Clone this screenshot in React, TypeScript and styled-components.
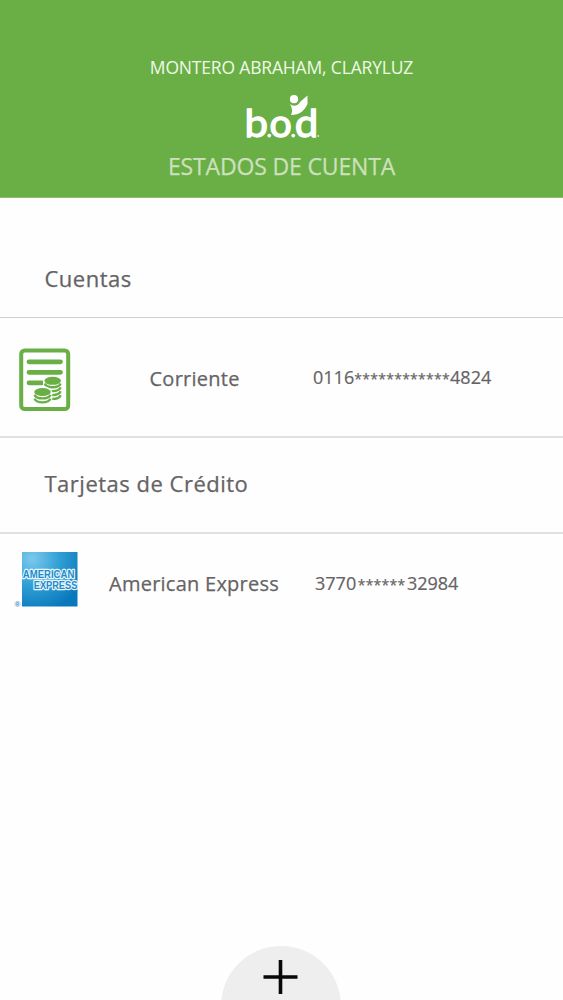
import React from "react";
import styled, { createGlobalStyle } from "styled-components";

const GlobalStyle = createGlobalStyle`
  * { box-sizing: border-box; }
  body { margin: 0; background: #fefefe; font-family: "Open Sans", "Noto Sans", sans-serif; }
`;

const Screen = styled.div`
  display: flex;
  flex-direction: column;
  width: 100%;
  height: 1000px;
  overflow: hidden;
  color: #656365;
`;

const Header = styled.header`
  display: flex;
  flex-direction: column;
  align-items: center;
  height: 198px;
  padding-top: 55px;
  background: #69af45;
  border-bottom: 1px solid #8fbd78;
`;

const UserName = styled.div`
  font-size: 17.5px;
  line-height: 24px;
  letter-spacing: -0.17px;
  color: #f0f9e8;
  white-space: nowrap;
`;

const Logo = styled.svg`
  display: block;
  width: 80px;
  height: 48px;
  margin-top: 13px;
  overflow: visible;
`;

const Title = styled.h1`
  margin: 10px 0 0;
  font-size: 23px;
  font-weight: 400;
  line-height: 32px;
  letter-spacing: -0.15px;
  color: #cde0bd;
  -webkit-text-stroke: 0.25px #cde0bd;
  white-space: nowrap;
`;

const SectionTitle = styled.h2<{ $height: number; $top: number; $line: string }>`
  margin: 0;
  height: ${(p) => p.$height}px;
  padding: ${(p) => p.$top}px 0 0 44.5px;
  border-bottom: ${(p) => p.$line};
  font-size: 22px;
  font-weight: 500;
  line-height: 30px;
  letter-spacing: 0.5px;
  -webkit-text-stroke: 0.25px #656365;
`;

const Row = styled.div<{ $height: number; $line?: boolean; $columns: string }>`
  display: grid;
  grid-template-columns: ${(p) => p.$columns};
  align-items: start;
  height: ${(p) => p.$height}px;
  border-bottom: ${(p) => (p.$line ? "2px solid #e0e0e1" : "none")};
`;

const Icon = styled.svg<{ $top: number; $left: number }>`
  display: block;
  margin: ${(p) => p.$top}px 0 0 ${(p) => p.$left}px;
  overflow: visible;
`;

const AccountName = styled.div<{ $top: number }>`
  padding-top: ${(p) => p.$top}px;
  font-size: 20px;
  font-weight: 500;
  line-height: 28px;
  letter-spacing: 0.25px;
  -webkit-text-stroke: 0.25px #656365;
  white-space: nowrap;
`;

const AccountNumber = styled.div<{ $top: number }>`
  display: flex;
  padding-top: ${(p) => p.$top}px;
  font-size: 18px;
  font-weight: 500;
  line-height: 26px;
  -webkit-text-stroke: 0.2px #656365;
  white-space: nowrap;
`;

const Mask = styled.span<{ $gap: number }>`
  padding: 2px ${(p) => p.$gap}px 0;
  font-size: 14px;
  letter-spacing: 0.25px;
`;

const Footer = styled.footer`
  display: flex;
  justify-content: center;
  height: 54px;
  margin-top: auto;
  padding-right: 1px;
  overflow: hidden;
`;

const AddButton = styled.button`
  display: flex;
  flex-shrink: 0;
  justify-content: center;
  width: 120px;
  height: 120px;
  padding: 13px 0 0;
  border: 0;
  border-radius: 50%;
  background: #efeeef;
`;

function BodLogo() {
  return (
    <Logo viewBox="242 92 80 48" role="img" aria-label="b.o.d.">
      <g fill="#fff" stroke="#fff" strokeWidth="1.300" fontFamily="Lato, sans-serif" fontWeight="400" fontSize="39.500">
        <text x="244.500" y="136.600" textLength="23.500" lengthAdjust="spacingAndGlyphs">b</text>
        <text x="269.600" y="136.600" fontSize="38.500" textLength="22.300" lengthAdjust="spacingAndGlyphs">o</text>
        <text x="294.800" y="136.600" textLength="23.500" lengthAdjust="spacingAndGlyphs">d</text>
      </g>
      <circle cx="269.300" cy="135.600" r="1.900" fill="#fff" />
      <circle cx="293.300" cy="135.600" r="1.900" fill="#fff" />
      <circle cx="318.300" cy="136" r="0.900" fill="#d9edcb" />
      <circle cx="294" cy="99.200" r="4.100" fill="#fff" />
      <path
        d="M289.300 103.500C292.500 107 298 106.500 300.500 101.500L307.500 95.500V104C304.500 110.500 300 115 291 115C293 111 292 106.500 289.300 103.500Z"
        fill="#fff"
      />
    </Logo>
  );
}

function CoinStack({ x, y, rows }: { x: number; y: number; rows: number }) {
  return (
    <g transform={`translate(${x} ${y})`}>
      <path
        d={`M-9.700 0 A9.700 5.700 0 0 1 9.700 0 V${rows * 3.9} A9.700 5 0 0 1 -9.700 ${rows * 3.9} Z`}
        fill="#fefefe"
      />
      <ellipse rx="8.300" ry="4" fill="#69af45" />
      {Array.from({ length: rows }, (_, i) => (
        <path
          key={i}
          d={`M-8 ${2.7 + i * 3.9} C-6 ${7.7 + i * 3.9} 6 ${7.7 + i * 3.9} 8 ${2.7 + i * 3.9}`}
          fill="none"
          stroke="#69af45"
          strokeWidth="2.300"
        />
      ))}
    </g>
  );
}

function StatementIcon() {
  return (
    <Icon $top={30} $left={19} width="52" height="64" viewBox="19 348 52 64">
      <rect x="21.200" y="350.500" width="47" height="58.500" rx="3.500" fill="#fefefe" stroke="#69af45" strokeWidth="4" />
      <path d="M29 361.800H60.500M29 372.300H60.500M29 382.800H42" stroke="#69af45" strokeWidth="4.800" strokeLinecap="round" />
      <CoinStack x={52.7} y={380.8} rows={4} />
      <CoinStack x={42.5} y={392} rows={2} />
    </Icon>
  );
}

function AmexIcon() {
  return (
    <Icon $top={17} $left={14} width="65" height="58" viewBox="14 551 65 58">
      <defs>
        <radialGradient id="card" cx="0.18" cy="0.12" r="1">
          <stop offset="0" stopColor="#7cc9ed" />
          <stop offset="0.5" stopColor="#309fd5" />
          <stop offset="1" stopColor="#0878bc" />
        </radialGradient>
      </defs>
      <rect x="22" y="552" width="55.500" height="54.500" fill="url(#card)" />
      <g
        fill="#1c8bc9"
        stroke="#eaf7fd"
        strokeWidth="2.400"
        strokeLinejoin="round"
        paintOrder="stroke"
        fontFamily="Liberation Sans, sans-serif"
        fontWeight="700"
        fontSize="10"
      >
        <text x="22.800" y="578.200" textLength="51.500" lengthAdjust="spacingAndGlyphs">AMERICAN</text>
        <text x="33.800" y="589.200" textLength="43.500" lengthAdjust="spacingAndGlyphs">EXPRESS</text>
      </g>
      <text x="14.500" y="607" fill="#3a91bd" fontFamily="Liberation Sans, sans-serif" fontWeight="700" fontSize="8">®</text>
    </Icon>
  );
}

export default function App() {
  return (
    <Screen>
      <GlobalStyle />
      <Header>
        <UserName>MONTERO ABRAHAM, CLARYLUZ</UserName>
        <BodLogo />
        <Title>ESTADOS DE CUENTA</Title>
      </Header>
      <main>
        <SectionTitle $height={120} $top={65} $line="1px solid #cfcfd0">Cuentas</SectionTitle>
        <Row $height={120} $line $columns="149.500px 163.500px 1fr">
          <StatementIcon />
          <AccountName $top={47}>Corriente</AccountName>
          <AccountNumber $top={46}>
            0116<Mask $gap={0.2}>************</Mask>4824
          </AccountNumber>
        </Row>
        <SectionTitle $height={96} $top={30} $line="2px solid #e0e0e1">Tarjetas de Crédito</SectionTitle>
        <Row $height={90} $columns="109px 206px 1fr">
          <AmexIcon />
          <AccountName $top={36}>American Express</AccountName>
          <AccountNumber $top={36}>
            3770<Mask $gap={1.5}>******</Mask>32984
          </AccountNumber>
        </Row>
      </main>
      <Footer>
        <AddButton aria-label="Agregar">
          <svg width="36" height="36" viewBox="0 0 36 36">
            <path d="M17.500 1V35M0.500 18H34.500" stroke="#080808" strokeWidth="3.600" />
          </svg>
        </AddButton>
      </Footer>
    </Screen>
  );
}
